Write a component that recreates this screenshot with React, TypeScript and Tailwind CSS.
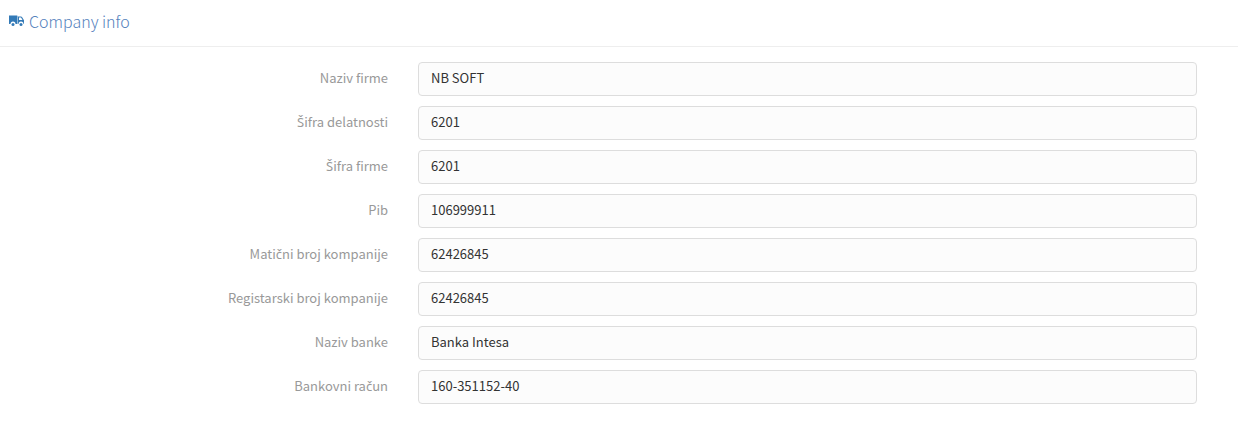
interface CompanyField {
  id: string;
  label: string;
  value: string;
}

const fields: CompanyField[] = [
  { id: "company-name", label: "Naziv firme", value: "NB SOFT" },
  { id: "activity-code", label: "Šifra delatnosti", value: "6201" },
  { id: "company-code", label: "Šifra firme", value: "6201" },
  { id: "pib", label: "Pib", value: "106999911" },
  { id: "company-number", label: "Matični broj kompanije", value: "62426845" },
  { id: "register-number", label: "Registarski broj kompanije", value: "62426845" },
  { id: "bank-name", label: "Naziv banke", value: "Banka Intesa" },
  { id: "bank-account", label: "Bankovni račun", value: "160-351152-40" },
];

export default function App() {
  return (
    <main className="bg-white pb-6 font-['Noto_Sans_CJK_SC','Noto_Sans',sans-serif]">
      <header className="flex h-[47px] items-center gap-[5px] border-b border-[#eeeeee] px-2 pb-1 text-[#337ab7]">
        <TruckIcon />
        <h1 className="text-[16px] leading-6 font-light text-[#5582bd]">Company info</h1>
      </header>

      <form className="mt-[15px] space-y-[10px]">
        {fields.map((field) => (
          <FieldRow key={field.id} field={field} />
        ))}
      </form>
    </main>
  );
}

function FieldRow({ field }: { field: CompanyField }) {
  return (
    <div className="grid grid-cols-3 items-center pr-[41px] pl-[3px]">
      <label htmlFor={field.id} className="pr-[13px] pb-0.5 text-right text-[13px] leading-5 text-[#999999]">
        <LabelText text={field.label} />
      </label>
      <div className="col-span-2 pl-[17px]">
        <input
          id={field.id}
          type="text"
          defaultValue={field.value}
          className="block h-[34px] w-full rounded border border-[#dddddd] bg-[#fcfcfc] px-3 pb-1 text-[13px] leading-5 text-[#333333] outline-none"
        />
      </div>
    </div>
  );
}

// The CJK family has no Š or č, so those letters are set in Noto Sans.
function LabelText({ text }: { text: string }) {
  return text.split(/([Šč])/).map((part, index) =>
    /[Šč]/.test(part) ? (
      <span key={index} className="font-['Noto_Sans',sans-serif]">
        {part}
      </span>
    ) : (
      part
    ),
  );
}

function TruckIcon() {
  return (
    <svg viewBox="0 0 32 24" className="h-3 w-4 shrink-0" fill="currentColor" aria-hidden="true">
      <path d="M2 1h16q1 0 1 1v16h-4a5 5 0 0 0-10 0H3q-1 0-1-1z" />
      <path
        fillRule="evenodd"
        d="M20 3h6q1 0 2 1l3 5q1 1 1 2v7h-1a5 5 0 0 0-10 0h-1zM22 5v5h7l-3-5z"
      />
      <circle cx="10" cy="19" r="3" />
      <circle cx="26" cy="19" r="3" />
    </svg>
  );
}
